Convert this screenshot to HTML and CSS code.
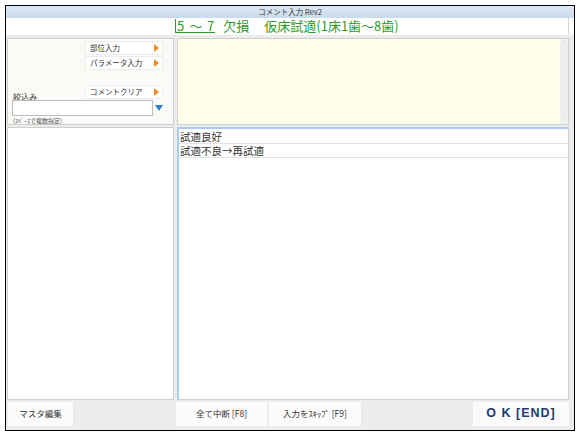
FILE: index.html
```html
<!DOCTYPE html>
<html>
<head>
<meta charset="utf-8">
<link rel="stylesheet" href="styles.css">
</head>
<body>
<div class="window">
  <div class="titlebar">コメント入力 Rev2</div>
  <div class="header">
    <div class="header-box"><span class="tooth">5 ～ 7</span><span class="gap1"></span>欠損<span class="gap2"></span>仮床試適(1床1歯～8歯)</div>
  </div>
  <div class="main">
    <div class="ctrl">
      <div class="btnrow"><div class="sbtn">部位入力<span class="arr"></span></div></div>
      <div class="btnrow"><div class="sbtn">パラメータ入力<span class="arr"></span></div></div>
      <div class="filterrow">
        <span class="flabel">絞込み</span>
        <div class="sbtn">コメントクリア<span class="arr"></span></div>
      </div>
      <div class="inputrow">
        <div class="input"></div>
        <span class="down"></span>
      </div>
      <div class="hint">(ｽﾍﾟｰｽで複数指定)</div>
    </div>
    <div class="memo">
      <div class="memo-area"></div>
      <div class="vscroll"><span class="up">˄</span><span class="dn">˅</span></div>
    </div>
    <div class="leftlist"></div>
    <div class="list">
      <div class="item">試適良好</div>
      <div class="item">試適不良→再試適</div>
    </div>
  </div>
  <div class="footer">
    <div class="fbtn b1">マスタ編集</div>
    <div class="spacer1"></div>
    <div class="fbtn b2">全て中断 [F8]</div>
    <div class="fbtn b3">入力をｽｷｯﾌﾟ [F9]</div>
    <div class="spacer2"></div>
    <div class="fbtn ok">O K [END]</div>
  </div>
</div>
</body>
</html>
```

FILE: styles.css
```css
* { box-sizing: border-box; }
html, body { margin: 0; padding: 0; background: #ffffff; }
body { font-family: "Noto Sans CJK JP", "Noto Sans", sans-serif; color: #333; }

.window {
  margin: 5px 0 0 5px;
  width: 570px;
  height: 426px;
  border: 1px solid #000;
  background: #ececec;
  display: flex;
  flex-direction: column;
}
.titlebar {
  height: 12px;
  background: linear-gradient(#dfe8f4, #c9daee);
  font-size: 7.5px;
  line-height: 12px;
  text-align: center;
  color: #333;
}
.header {
  height: 17px;
  background: #ffffff;
  padding-right: 5px;
  display: flex;
}
.header-box {
  flex: 1;
  border-right: 1px solid #d4d4d4;
  color: #2e9a2e;
  font-size: 13px;
  line-height: 16px;
  padding-left: 169px;
  white-space: nowrap;
}
.tooth {
  border-left: 1px solid #2e9a2e;
  border-bottom: 1px solid #2e9a2e;
  padding-left: 1px;
  padding-right: 1px;
  line-height: 13px;
  display: inline-block;
  word-spacing: 2px;
}
.gap1 { display: inline-block; width: 8px; }
.gap2 { display: inline-block; width: 15px; }
.main {
  flex: 1;
  display: grid;
  grid-template-columns: 167px 1fr;
  grid-template-rows: 87px 1fr;
  column-gap: 3px;
  row-gap: 2px;
  padding: 3px 5px 1px 1px;
}
.ctrl {
  background: #fafaf7;
  border: 1px solid #cfcfcf;
  padding: 2px 10px 0 4px;
  display: flex;
  flex-direction: column;
}
.btnrow { display: flex; justify-content: flex-end; margin-bottom: 1px; }
.sbtn {
  width: 78px;
  height: 14px;
  background: #ffffff;
  border: 1px solid #ececec;
  font-size: 7.5px;
  line-height: 12px;
  padding-left: 4px;
  position: relative;
  color: #333;
}
.arr {
  position: absolute;
  right: 3px;
  top: 2px;
  width: 0; height: 0;
  border-top: 4px solid transparent;
  border-bottom: 4px solid transparent;
  border-left: 5px solid #f28a22;
}
.filterrow {
  margin-top: 14px;
  display: flex;
  justify-content: space-between;
  align-items: flex-end;
}
.flabel { font-size: 8px; line-height: 10px; padding-left: 1px; margin-bottom: -3px; }
.inputrow { display: flex; align-items: center; margin-top: 1px; }
.input {
  width: 142px;
  height: 16px;
  background: #fff;
  border: 1px solid #bdbdbd;
}
.down {
  margin-left: 2px;
  width: 0; height: 0;
  border-left: 4px solid transparent;
  border-right: 4px solid transparent;
  border-top: 6px solid #2a7fd4;
}
.hint { font-size: 6px; line-height: 8px; color: #555; padding-left: 1px; margin-top: 1px; }

.memo {
  display: flex;
  border: 1px solid #cfcfcf;
  background: #fffeea;
}
.memo-area { flex: 1; background: #fffeea; }
.vscroll {
  width: 8px;
  background: #efefef;
  display: flex;
  flex-direction: column;
  justify-content: space-between;
  align-items: center;
  font-size: 6px;
  color: #aaa;
  line-height: 8px;
}
.leftlist {
  background: #ffffff;
  border: 1px solid #cfcfcf;
}
.list {
  background: #ffffff;
  border: 1px solid #d0d0d0;
  border-top: 2px solid #a9cdf5;
  border-left: 2px solid #a9cdf5;
  padding-top: 1px;
}
.item {
  font-size: 10.5px;
  line-height: 13px;
  height: 14px;
  padding-left: 1px;
  border-bottom: 1px solid #e2e2e2;
  color: #333;
}
.footer {
  height: 29px;
  display: flex;
  padding: 1px 5px 4px 2px;
  gap: 2px;
  background: #ececec;
}
.fbtn {
  background: #fbfbfb;
  font-size: 8.5px;
  line-height: 22px;
  text-align: center;
  color: #333;
}
.b1 { width: 65px; }
.spacer1 { width: 99px; }
.b2 { width: 91px; }
.b3 { width: 92px; }
.spacer2 { flex: 1; }
.ok {
  width: 96px;
  color: #1f3a7a;
  font-weight: bold;
  font-size: 12.5px;
  font-family: "Liberation Sans", "Noto Sans CJK JP", sans-serif;
  letter-spacing: 1px;
}
```
